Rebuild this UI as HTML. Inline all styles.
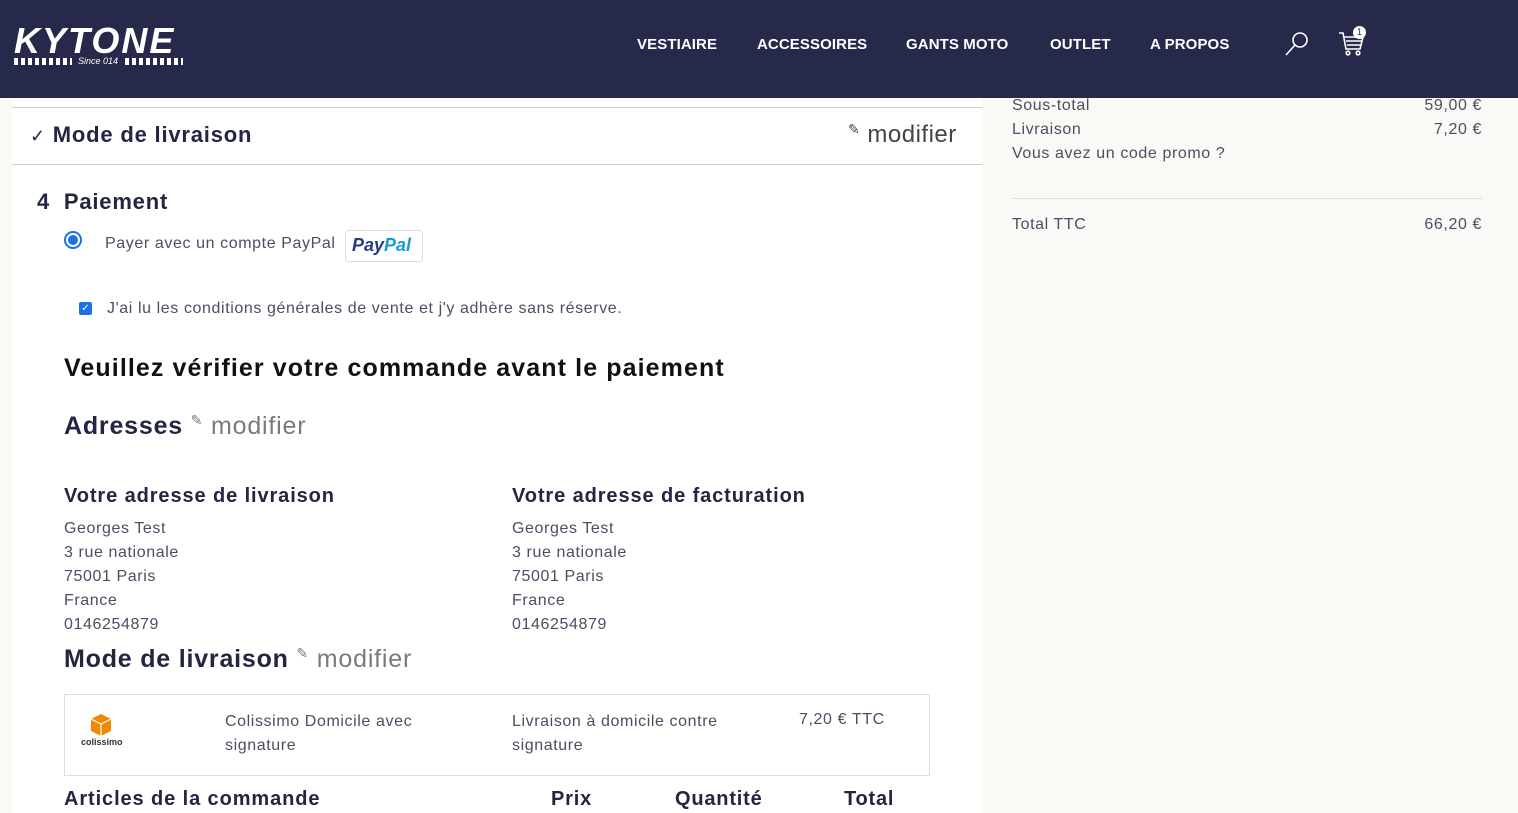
<!DOCTYPE html>
<html><head><meta charset="utf-8"><style>
*{margin:0;padding:0;box-sizing:border-box}
body{width:1518px;height:813px;overflow:hidden;background:#f9f9f6;font-family:"Liberation Sans",sans-serif;color:#4a4a5a;position:relative}
.hdr{position:absolute;left:0;top:0;width:1518px;height:98px;background:#27294b}
.nav{position:absolute;top:36px;color:#fff;font-weight:bold;font-size:15px;letter-spacing:0.1px}
.main{position:absolute;left:12px;top:98px;width:970px;height:715px;background:#fff}
.abs{position:absolute}
.h{color:#232642;font-weight:bold;letter-spacing:0.8px}
.t{font-size:16px;color:#4d4d63;letter-spacing:0.6px}
.mod{color:#7a7a7a}
</style></head><body>
<div class="main">
 <div class="abs" style="left:0;top:9px;width:970px;border-top:1px solid #ccc"></div>
 <div class="abs" style="left:0;top:66px;width:970px;border-top:1px solid #ccc"></div>
 <div class="abs h" style="left:18px;top:24px;font-size:22px"><span style="font-weight:normal;font-size:18px">✓</span> Mode de livraison</div>
 <div class="abs" style="left:836px;top:23px;font-size:24px;color:#444;letter-spacing:0.5px"><span style="font-size:14px;vertical-align:top">✎</span> modifier</div>
 <div class="abs h" style="left:25px;top:91px;font-size:22px">4&nbsp;&nbsp;Paiement</div>
 <div class="abs" style="left:52px;top:133px;width:18px;height:18px;border-radius:50%;border:2px solid #1a73e8;background:#fff"><div style="margin:2px;width:10px;height:10px;border-radius:50%;background:#1a73e8"></div></div>
 <div class="abs t" style="left:93px;top:137px">Payer avec un compte PayPal</div>
 <div class="abs" style="left:333px;top:132px;width:78px;height:32px;border:1px solid #ddd;border-radius:3px;font-weight:bold;font-style:italic;font-size:18px;padding:4px 6px"><span style="color:#253b80">Pay</span><span style="color:#179bd7">Pal</span></div>
 <div class="abs" style="left:67px;top:204px;width:13px;height:13px;border-radius:2px;background:#1a73e8;color:#fff;font-size:10px;text-align:center;line-height:13px">✓</div>
 <div class="abs t" style="left:95px;top:202px">J'ai lu les conditions générales de vente et j'y adhère sans réserve.</div>
 <div class="abs h" style="left:52px;top:256px;font-size:25px;color:#111;letter-spacing:1.1px">Veuillez vérifier votre commande avant le paiement</div>
 <div class="abs h" style="left:52px;top:314px;font-size:25px">Adresses <span class="mod" style="font-weight:normal;font-size:14px;vertical-align:top">✎</span> <span class="mod" style="font-weight:normal">modifier</span></div>
 <div class="abs h" style="left:52px;top:387px;font-size:20px;letter-spacing:0.9px">Votre adresse de livraison</div>
 <div class="abs h" style="left:500px;top:387px;font-size:20px;letter-spacing:0.9px">Votre adresse de facturation</div>
 <div class="abs t" style="left:52px;top:419px;line-height:24px">Georges Test<br>3 rue nationale<br>75001 Paris<br>France<br>0146254879</div>
 <div class="abs t" style="left:500px;top:419px;line-height:24px">Georges Test<br>3 rue nationale<br>75001 Paris<br>France<br>0146254879</div>
 <div class="abs h" style="left:52px;top:547px;font-size:25px">Mode de livraison <span class="mod" style="font-weight:normal;font-size:14px;vertical-align:top">✎</span> <span class="mod" style="font-weight:normal">modifier</span></div>
 <div class="abs" style="left:52px;top:596px;width:866px;height:82px;border:1px solid #ddd">
  <svg class="abs" style="left:24px;top:18px" width="24" height="24" viewBox="0 0 24 24"><path d="M12 1L22 6V18L12 23L2 18V6Z" fill="#f08a00"/><path d="M2 6L12 11L22 6M12 11V23" stroke="#fff" stroke-width="1.2" fill="none"/></svg>
  <div class="abs" style="left:16px;top:42px;font-size:9px;color:#333;font-weight:bold">colissimo</div>
  <div class="abs t" style="left:160px;top:15px;line-height:24px">Colissimo Domicile avec<br>signature</div>
  <div class="abs t" style="left:447px;top:15px;line-height:24px">Livraison à domicile contre<br>signature</div>
  <div class="abs t" style="left:734px;top:16px">7,20 € TTC</div>
 </div>
 <div class="abs h" style="left:52px;top:690px;font-size:20px;letter-spacing:0.9px">Articles de la commande</div>
 <div class="abs h" style="left:539px;top:690px;font-size:20px">Prix</div>
 <div class="abs h" style="left:663px;top:690px;font-size:20px">Quantité</div>
 <div class="abs h" style="left:832px;top:690px;font-size:20px">Total</div>
</div>
<div class="abs t" style="left:1012px;top:94px;width:470px;line-height:24px">Sous-total<span style="float:right">59,00 €</span><br>Livraison<span style="float:right">7,20 €</span><br>Vous avez un code promo ?</div>
<div class="abs" style="left:1012px;top:198px;width:470px;border-top:1px solid #ddd"></div>
<div class="abs t" style="left:1012px;top:216px;width:470px">Total TTC<span style="float:right">66,20 €</span></div>
<div class="hdr">
 <div class="abs" style="left:14px;top:20px;color:#fff;font-weight:bold;font-style:italic;font-size:36px;letter-spacing:2px">KYTONE</div>
 <div class="abs" style="left:14px;top:58px;width:58px;height:7px;background:repeating-linear-gradient(90deg,#fff 0 4px,transparent 4px 7px)"></div>
 <div class="abs" style="left:78px;top:56px;color:#fff;font-size:9px;font-style:italic">Since 014</div>
 <div class="abs" style="left:125px;top:58px;width:58px;height:7px;background:repeating-linear-gradient(90deg,#fff 0 4px,transparent 4px 7px)"></div>
 <div class="nav" style="left:637px">VESTIAIRE</div>
 <div class="nav" style="left:757px">ACCESSOIRES</div>
 <div class="nav" style="left:906px">GANTS MOTO</div>
 <div class="nav" style="left:1050px">OUTLET</div>
 <div class="nav" style="left:1150px">A PROPOS</div>
 <svg class="abs" style="left:1284px;top:30px" width="26" height="26" viewBox="0 0 26 26" fill="none" stroke="#fff" stroke-width="1.6"><circle cx="16" cy="10" r="7"/><path d="M11 15L2 25"/></svg>
 <svg class="abs" style="left:1338px;top:30px" width="28" height="26" viewBox="0 0 28 26" fill="none" stroke="#fff" stroke-width="1.6"><path d="M1 3H5L8 19H22L25 7H6"/><path d="M8 11H24M9 15H23"/><circle cx="10" cy="23" r="1.8"/><circle cx="20" cy="23" r="1.8"/></svg>
 <div class="abs" style="left:1353px;top:26px;width:13px;height:13px;border-radius:50%;background:#fff;color:#27294b;font-size:9px;text-align:center;line-height:13px">1</div>
</div>
</body></html>
